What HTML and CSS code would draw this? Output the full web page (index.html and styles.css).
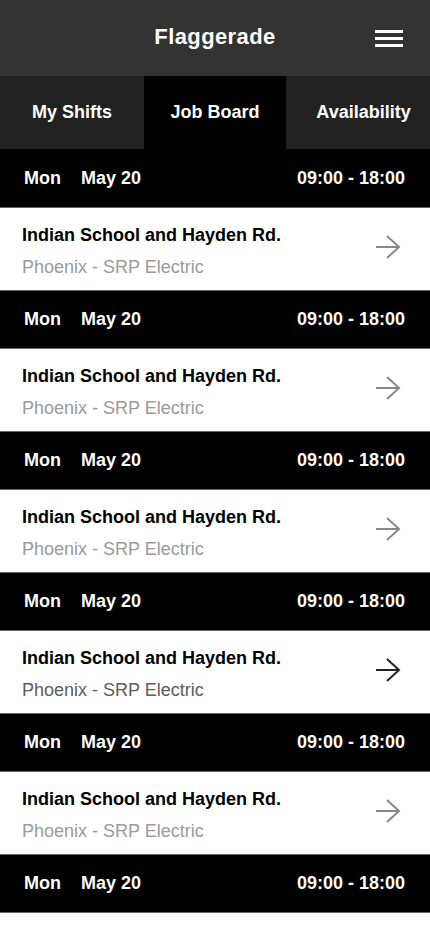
FILE: index.html
```html
<!DOCTYPE html>
<html lang="en">
<head>
  <meta charset="UTF-8" />
  <meta name="viewport" content="width=device-width, initial-scale=1.0" />
  <title>Flaggerade - Job Board</title>
  <link rel="stylesheet" href="styles.css">
</head>
<body>
  <header class="topbar">
    <h1 class="brand">Flaggerade</h1>
    <button class="menu" type="button" aria-label="Menu">
      <span></span><span></span><span></span>
    </button>
  </header>

  <nav class="tabs">
    <a class="tab" href="#">My Shifts</a>
    <a class="tab active" href="#">Job Board</a>
    <a class="tab" href="#">Availability</a>
  </nav>

  <ul class="shifts">
    <li class="shift">
      <div class="shift-date">
        <span class="day">Mon</span><span class="date">May 20</span>
        <span class="hours">09:00 - 18:00</span>
      </div>
      <a class="shift-job" href="#">
        <div class="job-text">
          <p class="job-place">Indian School and Hayden Rd.</p>
          <p class="job-client">Phoenix - SRP Electric</p>
        </div>
        <svg class="go" width="26" height="24" viewBox="0 0 26 24"><path d="M1 12H24M12 1L24 12L12 23" /></svg>
      </a>
    </li>
    <li class="shift">
      <div class="shift-date">
        <span class="day">Mon</span><span class="date">May 20</span>
        <span class="hours">09:00 - 18:00</span>
      </div>
      <a class="shift-job" href="#">
        <div class="job-text">
          <p class="job-place">Indian School and Hayden Rd.</p>
          <p class="job-client">Phoenix - SRP Electric</p>
        </div>
        <svg class="go" width="26" height="24" viewBox="0 0 26 24"><path d="M1 12H24M12 1L24 12L12 23" /></svg>
      </a>
    </li>
    <li class="shift">
      <div class="shift-date">
        <span class="day">Mon</span><span class="date">May 20</span>
        <span class="hours">09:00 - 18:00</span>
      </div>
      <a class="shift-job" href="#">
        <div class="job-text">
          <p class="job-place">Indian School and Hayden Rd.</p>
          <p class="job-client">Phoenix - SRP Electric</p>
        </div>
        <svg class="go" width="26" height="24" viewBox="0 0 26 24"><path d="M1 12H24M12 1L24 12L12 23" /></svg>
      </a>
    </li>
    <li class="shift">
      <div class="shift-date">
        <span class="day">Mon</span><span class="date">May 20</span>
        <span class="hours">09:00 - 18:00</span>
      </div>
      <a class="shift-job hover" href="#">
        <div class="job-text">
          <p class="job-place">Indian School and Hayden Rd.</p>
          <p class="job-client">Phoenix - SRP Electric</p>
        </div>
        <svg class="go" width="26" height="24" viewBox="0 0 26 24"><path d="M1 12H24M12 1L24 12L12 23" /></svg>
      </a>
    </li>
    <li class="shift">
      <div class="shift-date">
        <span class="day">Mon</span><span class="date">May 20</span>
        <span class="hours">09:00 - 18:00</span>
      </div>
      <a class="shift-job" href="#">
        <div class="job-text">
          <p class="job-place">Indian School and Hayden Rd.</p>
          <p class="job-client">Phoenix - SRP Electric</p>
        </div>
        <svg class="go" width="26" height="24" viewBox="0 0 26 24"><path d="M1 12H24M12 1L24 12L12 23" /></svg>
      </a>
    </li>
    <li class="shift">
      <div class="shift-date">
        <span class="day">Mon</span><span class="date">May 20</span>
        <span class="hours">09:00 - 18:00</span>
      </div>
    </li>
  </ul>
</body>
</html>
```

FILE: styles.css
```css
body {
  margin: 0;
  font-family: "Liberation Sans", Arial, sans-serif;
  background: #fff;
  color: #000;
}
.topbar {
  height: 76px;
  display: grid;
  grid-template-columns: 1fr auto 1fr;
  align-items: center;
  padding: 0 27px 3px;
  background: #333;
  box-sizing: border-box;
}
.brand {
  grid-column: 2;
  margin: 0;
  font-size: 22px;
  letter-spacing: 0.4px;
  color: #fff;
}
.menu {
  justify-self: end;
  display: flex;
  flex-direction: column;
  gap: 4px;
  width: 28px;
  padding: 0;
  margin-top: 3px;
  border: 0;
  background: none;
}
.menu span {
  height: 3px;
  background: #fff;
}
.tabs {
  height: 73px;
  display: grid;
  grid-template-columns: 144px 142px 1fr;
  background: #212121;
}
.tab {
  display: flex;
  align-items: center;
  justify-content: center;
  font-size: 18px;
  font-weight: bold;
  color: #fff;
  text-decoration: none;
}
.tab:last-child {
  padding-left: 11px;
}
.tab.active {
  background: #000;
}
.shifts {
  list-style: none;
  margin: 0;
  padding: 0;
}
.shift-date {
  height: 59px;
  display: flex;
  align-items: center;
  padding: 0 24px;
  background: #000;
  border-top: 1px solid #666;
  border-bottom: 1px solid #666;
  box-sizing: border-box;
  font-size: 18px;
  font-weight: bold;
  color: #fff;
}
.shift:first-child .shift-date {
  border-top-color: #000;
}
.day {
  margin-right: 20px;
}
.hours {
  margin-left: auto;
  margin-right: 1px;
}
.shift-job {
  height: 82px;
  display: flex;
  align-items: center;
  padding: 4px 29px 0 22px;
  box-sizing: border-box;
  text-decoration: none;
}
.job-text {
  flex: 1;
  display: flex;
  flex-direction: column;
  gap: 11px;
}
.job-text p {
  margin: 0;
  font-size: 18px;
  line-height: 21px;
}
.job-place {
  font-weight: bold;
  color: #000;
}
.job-client {
  color: #9a9a9a;
}
.go {
  margin-bottom: 9px;
  fill: none;
  stroke: #888;
  stroke-width: 2;
}
.shift-job.hover .job-client {
  color: #5c5c5c;
}
.shift-job.hover .go {
  stroke: #222;
}
```
